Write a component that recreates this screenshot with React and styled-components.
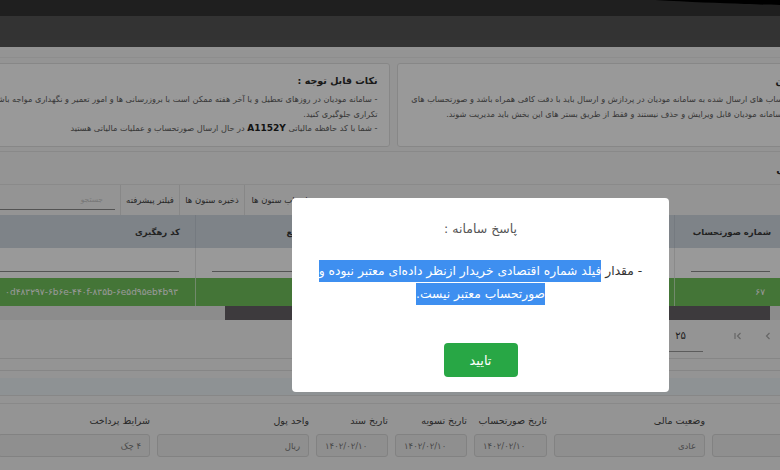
import React from 'react';
import styled, { createGlobalStyle } from 'styled-components';

const Global = createGlobalStyle`
  html, body { margin: 0; padding: 0; background: #f7f7f7; }
  body { font-family: "DejaVu Sans", sans-serif; overflow: hidden; }
  * { box-sizing: border-box; }
`;

const Viewport = styled.div`
  position: relative;
  width: 780px;
  height: 470px;
  overflow: hidden;
  background: #f7f7f7;
`;

const Page = styled.div`
  width: 1000px;
  margin-left: -107px;
  direction: rtl;
`;

const TopBar = styled.div`
  height: 16px;
  background: #343434;
`;

const Header = styled.div`
  height: 31px;
  background: #555555;
`;

const Content = styled.div`
  padding: 0 16px;
`;

const NoticeCard = styled.div`
  margin-top: 10px;
  border-top: 1px solid #ececec;
  padding-top: 5px;
  display: flex;
  gap: 7px;
`;

const Panel = styled.div`
  flex: 1;
  height: 84px;
  background: #ffffff;
  border: 1px solid #e2e2e2;
  border-radius: 3px;
  padding: 8px 11px 0;
  overflow: hidden;
`;

const PanelTitle = styled.div`
  font-size: 9.5px;
  font-weight: bold;
  color: #2c2c2c;
  line-height: 18px;
  white-space: nowrap;
  margin-bottom: 2px;
`;

const PanelLine = styled.div`
  font-size: 8.2px;
  color: #5e5e5e;
  line-height: 14.5px;
  white-space: nowrap;
`;

const Code = styled.b`
  color: #222;
  font-size: 9px;
`;

const ListCard = styled.div`
  margin-top: 4px;
  border-top: 1px solid #e4e4e4;
`;

const ListTitle = styled.div`
  height: 32px;
  line-height: 36px;
  padding-right: 4px;
  font-size: 10px;
  font-weight: bold;
  color: #2c2c2c;
  white-space: nowrap;
`;

const Toolbar = styled.div`
  height: 31px;
  border-top: 1px solid #e6e6e6;
  display: flex;
  align-items: stretch;
  padding-left: 16px;
`;

const Spacer = styled.div`
  flex: 1;
`;

const ToolButton = styled.div`
  width: ${(p) => p.$w}px;
  border-left: 1px solid #e2e2e2;
  font-size: 8.5px;
  color: #444;
  display: flex;
  align-items: center;
  justify-content: center;
  white-space: nowrap;
`;

const Search = styled.div`
  width: 190px;
  margin-right: 5px;
  display: flex;
  align-items: flex-end;
  padding-bottom: 5px;
`;

const SearchField = styled.div`
  width: 100%;
  border-bottom: 1px solid #8a8a8a;
  font-size: 7.5px;
  color: #c8c8c8;
  padding: 0 12px 5px;
`;

const Row = styled.div`
  display: grid;
  grid-template-columns: 91px 112px 170px 150px 159px 286px;
  height: ${(p) => p.$h}px;
  background: ${(p) => p.$bg};
`;

const HeadCell = styled.div`
  border-left: 1px solid #c3ccd5;
  padding-right: 15px;
  display: flex;
  align-items: center;
  font-size: 8.5px;
  font-weight: bold;
  color: #3a3a3a;
  white-space: nowrap;
  overflow: hidden;
`;

const FilterCell = styled.div`
  border-left: 1px solid #e6e6e6;
  padding: 0 16px 6px;
  display: flex;
  align-items: flex-end;
`;

const FilterLine = styled.div`
  width: 100%;
  border-bottom: 1px solid #8c8c8c;
`;

const DataCell = styled.div`
  border-left: 1px solid rgba(255, 255, 255, 0.55);
  padding-right: ${(p) => p.$pr || 17}px;
  display: flex;
  align-items: center;
  font-size: 9px;
  color: #ffffff;
  white-space: nowrap;
  overflow: hidden;
`;

const Ltr = styled.span`
  direction: ltr;
  unicode-bidi: isolate;
`;

const ScrollTrack = styled.div`
  height: 14px;
  background: #e9e9e9;
  direction: ltr;
  display: flex;
`;

const ScrollThumb = styled.div`
  margin-left: 316px;
  width: 545px;
  background: #666266;
`;

const Pager = styled.div`
  height: 32px;
  display: flex;
  align-items: center;
  gap: 20px;
  padding-right: 104px;
`;

const PagerIcon = styled.svg`
  width: 10px;
  height: 10px;
  flex: none;
`;

const PageSize = styled.div`
  width: 60px;
  height: 32px;
  margin-right: 10px;
  border-bottom: 1px solid #9a9a9a;
  font-size: 10px;
  color: #333;
  padding-right: 17px;
  display: flex;
  align-items: center;
`;

const Rule = styled.div`
  margin-top: ${(p) => p.$mt}px;
  border-top: 1px solid #e0e0e0;
`;

const Band = styled.div`
  margin-top: 7px;
  height: 18px;
  background: #edf3f7;
  border-bottom: 1px solid #e2e2e2;
`;

const FormCard = styled.div`
  margin-top: 7px;
  border-top: 1px solid #e4e4e4;
  padding: 9px 14px 0 0;
  display: flex;
  gap: 7px;
`;

const Field = styled.div`
  width: ${(p) => p.$w}px;
  flex: none;
  display: flex;
  flex-direction: column;
  gap: 5px;
`;

const Label = styled.div`
  font-size: 9.5px;
  color: #444;
  line-height: 16px;
  height: 16px;
  white-space: nowrap;
`;

const Input = styled.div`
  height: 23px;
  background: #eeeeee;
  border: 1px solid #d9d9d9;
  border-radius: 3px;
  font-size: 8.5px;
  color: #7a7a7a;
  display: flex;
  align-items: center;
  padding: 0 8px;
  white-space: nowrap;
  direction: ${(p) => (p.$ltr ? 'ltr' : 'rtl')};
`;

const Scribble = styled.svg`
  position: absolute;
  top: 0;
  left: 0;
  width: 780px;
  height: 8px;
  z-index: 1;
`;

const Overlay = styled.div`
  position: absolute;
  inset: 0;
  background: rgba(0, 0, 0, 0.4);
  z-index: 5;
`;

const Modal = styled.div`
  position: absolute;
  left: 292px;
  top: 198px;
  width: 377px;
  height: 194px;
  background: #ffffff;
  border-radius: 4px;
  z-index: 6;
  direction: rtl;
  display: flex;
  flex-direction: column;
  align-items: center;
  padding-top: 21px;
`;

const ModalTitle = styled.div`
  font-size: 12.5px;
  color: #555;
  line-height: 20px;
`;

const Message = styled.div`
  margin-top: 21px;
  font-size: 12.3px;
  line-height: 23px;
  color: #333;
  text-align: center;
  white-space: nowrap;
`;

const Selected = styled.span`
  background: #3e8ff0;
  color: #ffffff;
  padding: 4px 0;
`;

const OkButton = styled.button`
  margin-top: 37px;
  width: 74px;
  height: 34px;
  background: #28a745;
  color: #ffffff;
  border: none;
  border-radius: 4px;
  font-family: inherit;
  font-size: 13px;
`;

const formFields = [
  { w: 151, label: 'نوع صورتحساب', value: '' },
  { w: 151, label: 'وضعیت مالی', value: 'عادی' },
  { w: 73, label: 'تاریخ صورتحساب', value: '۱۴۰۲/۰۲/۱۰', ltr: true },
  { w: 72, label: 'تاریخ تسویه', value: '۱۴۰۲/۰۲/۱۰', ltr: true },
  { w: 72, label: 'تاریخ سند', value: '۱۴۰۲/۰۲/۱۰', ltr: true },
  { w: 152, label: 'واحد پول', value: 'ریال' },
  { w: 152, label: 'شرایط پرداخت', value: '۴ چک' },
  { w: 152, label: 'نوع پرداخت', value: '' },
];

export default function App() {
  return (
    <Viewport>
      <Global />
      <Scribble viewBox="0 0 780 8">
        <path d="M655 0 C690 2 720 3 745 4 C760 4.5 770 5 780 5 L780 0 Z" fill="#000" />
      </Scribble>
      <Page>
        <TopBar />
        <Header />
        <Content>
          <NoticeCard>
            <Panel>
              <PanelTitle>لزوم رعایت قوانین</PanelTitle>
              <PanelLine>- توجه مهم: کلیه صورتحساب های ارسال شده به سامانه مودیان در پردازش و ارسال باید با دقت کافی همراه باشد و صورتحساب های</PanelLine>
              <PanelLine>ارسال شده قبلی نیز در سامانه مودیان قابل ویرایش و حذف نیستند و فقط از طریق بستر های این بخش باید مدیریت شوند.</PanelLine>
            </Panel>
            <Panel>
              <PanelTitle>نکات قابل توجه :</PanelTitle>
              <PanelLine>- سامانه مودیان در روزهای تعطیل و یا آخر هفته ممکن است با بروزرسانی ها و امور تعمیر و نگهداری مواجه باشد، لطفا از ارسال صورتحساب های</PanelLine>
              <PanelLine>تکراری جلوگیری کنید.</PanelLine>
              <PanelLine>- شما با کد حافظه مالیاتی <Code>A1152Y</Code> در حال ارسال صورتحساب و عملیات مالیاتی هستید</PanelLine>
            </Panel>
          </NoticeCard>

          <ListCard>
            <ListTitle>صورتحساب ارسالی</ListTitle>
            <Toolbar>
              <Spacer />
              <ToolButton $w={70}>انتخاب ستون ها</ToolButton>
              <ToolButton $w={65}>ذخیره ستون ها</ToolButton>
              <ToolButton $w={59}>فیلتر پیشرفته</ToolButton>
              <Search>
                <SearchField>جستجو</SearchField>
              </Search>
            </Toolbar>
            <Row $h={33} $bg="#d2dae3">
              <HeadCell>ردیف</HeadCell>
              <HeadCell>شماره صورتحساب</HeadCell>
              <HeadCell>تاریخ صورتحساب</HeadCell>
              <HeadCell>وضعیت</HeadCell>
              <HeadCell>شماره مرجع</HeadCell>
              <HeadCell>کد رهگیری</HeadCell>
            </Row>
            <Row $h={30} $bg="#ffffff">
              <FilterCell><FilterLine /></FilterCell>
              <FilterCell><FilterLine /></FilterCell>
              <FilterCell><FilterLine /></FilterCell>
              <FilterCell><FilterLine /></FilterCell>
              <FilterCell><FilterLine /></FilterCell>
              <FilterCell><FilterLine /></FilterCell>
            </Row>
            <Row $h={28} $bg="#72c35c">
              <DataCell>۱</DataCell>
              <DataCell $pr={21}>۶۷</DataCell>
              <DataCell>۱۴۰۲/۰۲/۱۰</DataCell>
              <DataCell>موفق</DataCell>
              <DataCell>۰</DataCell>
              <DataCell><Ltr>۰d۴۸۳۲۹۷-۶b۶e-۴۴۰f-۸۳۵b-۶e۵d۹۵eb۴b۹۳</Ltr></DataCell>
            </Row>
            <ScrollTrack>
              <ScrollThumb />
            </ScrollTrack>
            <Pager>
              <PagerIcon viewBox="0 0 10 10">
                <path d="M6.5 2 L3.5 5 L6.5 8" fill="none" stroke="#aaa" strokeWidth="1.2" />
              </PagerIcon>
              <PagerIcon viewBox="0 0 10 10">
                <path d="M2 2 L2 8 M7.5 2 L4.5 5 L7.5 8" fill="none" stroke="#aaa" strokeWidth="1.2" />
              </PagerIcon>
              <PageSize>۲۵</PageSize>
            </Pager>
            <Rule $mt={6} />
            <Rule $mt={11} />
            <Band />
          </ListCard>

          <FormCard>
            {formFields.map((f) => (
              <Field key={f.label} $w={f.w}>
                <Label>{f.label}</Label>
                <Input $ltr={f.ltr}>{f.value}</Input>
              </Field>
            ))}
          </FormCard>
        </Content>
      </Page>

      <Overlay />
      <Modal>
        <ModalTitle>پاسخ سامانه :</ModalTitle>
        <Message>
          - مقدار <Selected>فیلد شماره اقتصادی خریدار ازنظر داده‌ای معتبر نبوده و</Selected>
          <br />
          <Selected>صورتحساب معتبر نیست.</Selected>
        </Message>
        <OkButton>تایید</OkButton>
      </Modal>
    </Viewport>
  );
}
